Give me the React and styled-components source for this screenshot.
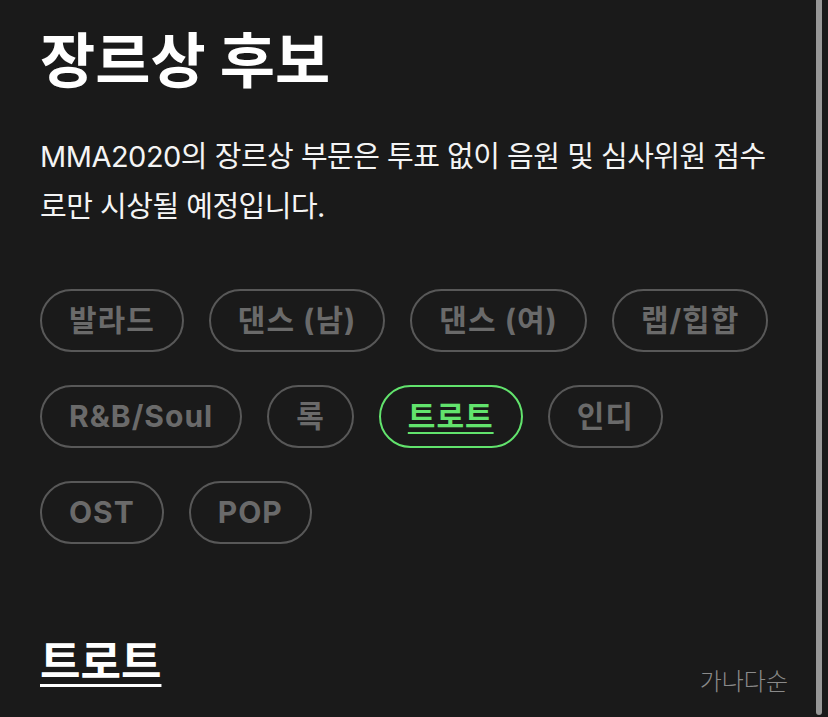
import React, { useState } from "react";
import styled, { createGlobalStyle } from "styled-components";

const GlobalStyle = createGlobalStyle`
  html, body {
    margin: 0;
    padding: 0;
    background: #1a1a1a;
  }
  body {
    font-family: Inter, "Noto Sans CJK KR", sans-serif;
    color: #ffffff;
    overflow: hidden;
  }
`;

const Page = styled.div`
  display: flex;
  height: 717px;
  background: #1a1a1a;
`;

const Content = styled.main`
  flex: 1;
  padding: 21px 28px 0 40px;
  min-width: 0;
`;

const ScrollThumb = styled.div`
  width: 6px;
  margin: 0 6px 2px 0;
  background: #979797;
  border-radius: 0 0 3px 3px;
`;

const Title = styled.h1`
  margin: 0;
  font-size: 60px;
  line-height: 80px;
  font-weight: 700;
`;

const Description = styled.p`
  margin: 31px 0 0;
  font-size: 29px;
  line-height: 50px;
  font-weight: 400;
  letter-spacing: -0.5px;
  color: #f4f4f4;
`;

const ChipList = styled.div`
  display: flex;
  flex-wrap: wrap;
  gap: 33px 25px;
  margin-top: 57px;
`;

const Chip = styled.button`
  font-family: Inter, "Noto Sans CJK KR", sans-serif;
  font-size: 30px;
  line-height: 35px;
  font-weight: 700;
  letter-spacing: 1px;
  padding: 12px 27px;
  border-radius: 999px;
  background: transparent;
  border: 2px solid ${({ $active }) => ($active ? "#62e36d" : "#585858")};
  color: ${({ $active }) => ($active ? "#62e36d" : "#6a6a6a")};
  text-decoration: ${({ $active }) => ($active ? "underline" : "none")};
  text-underline-offset: 5px;
  text-decoration-thickness: 2px;
  cursor: pointer;
`;

const SectionHeader = styled.div`
  display: flex;
  justify-content: space-between;
  align-items: flex-end;
  margin-top: 92px;
`;

const SectionTitle = styled.h2`
  margin: 0;
  font-size: 44px;
  line-height: 52px;
  font-weight: 700;
  text-decoration: underline;
  text-underline-offset: 6px;
  text-decoration-thickness: 3px;
`;

const SortLabel = styled.span`
  font-size: 24px;
  line-height: 28px;
  font-weight: 300;
  color: #8a8a8a;
  margin-bottom: -8px;
`;

const genres = [
  "발라드",
  "댄스 (남)",
  "댄스 (여)",
  "랩/힙합",
  "R&B/Soul",
  "록",
  "트로트",
  "인디",
  "OST",
  "POP",
];

export default function App() {
  const [selected, setSelected] = useState("트로트");

  return (
    <>
      <GlobalStyle />
      <Page>
        <Content>
          <Title>장르상 후보</Title>
          <Description>
            MMA2020의 장르상 부문은 투표 없이 음원 및 심사위원 점수로만 시상될
            예정입니다.
          </Description>
          <ChipList>
            {genres.map((g) => (
              <Chip key={g} $active={g === selected} onClick={() => setSelected(g)}>
                {g}
              </Chip>
            ))}
          </ChipList>
          <SectionHeader>
            <SectionTitle>{selected}</SectionTitle>
            <SortLabel>가나다순</SortLabel>
          </SectionHeader>
        </Content>
        <ScrollThumb />
      </Page>
    </>
  );
}
